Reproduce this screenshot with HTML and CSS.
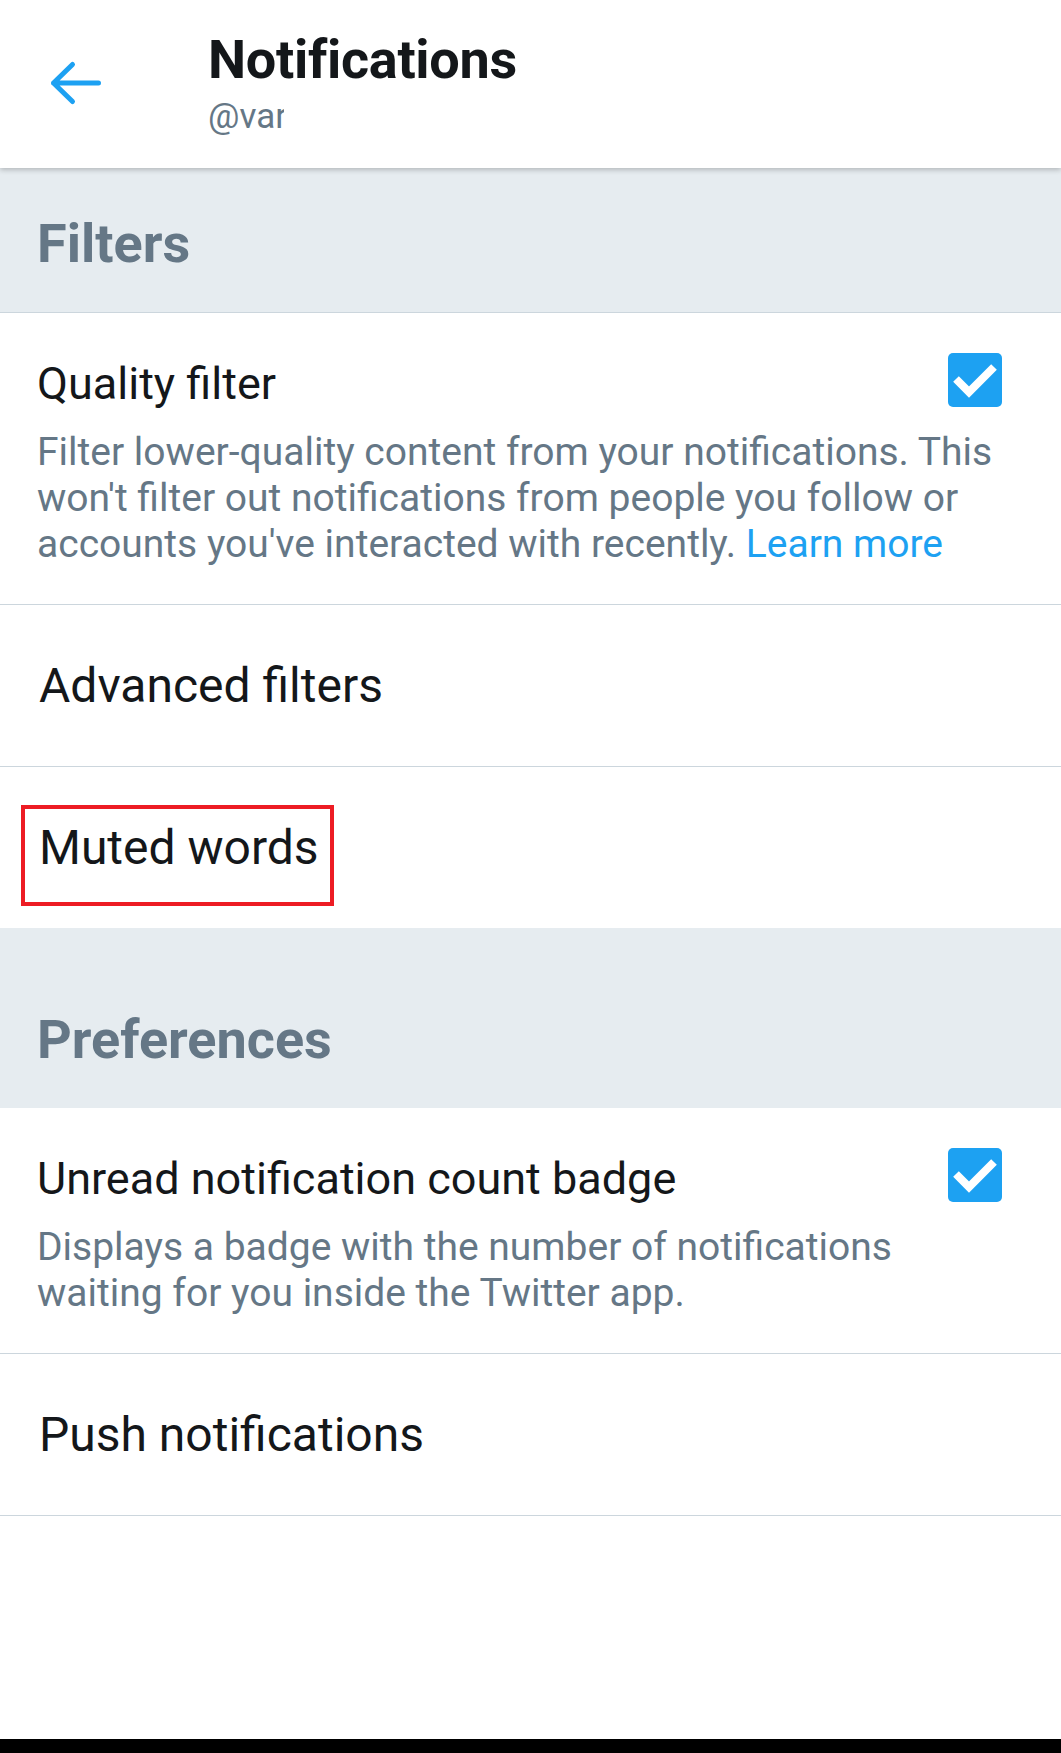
FILE: index.html
```html
<!DOCTYPE html>
<html lang="en">
<head>
<meta charset="utf-8">
<title>Notifications</title>
<link rel="stylesheet" href="styles.css">
</head>
<body>
<div class="screen">
  <header class="appbar">
    <div class="back">
      <svg class="back-icon" width="56" height="46" viewBox="0 0 56 46" aria-hidden="true">
        <path d="M5.5 23 H50.5 M24.5 4.5 L5.5 23 L24.5 41.5" fill="none" stroke="#1da1f2" stroke-width="5" stroke-linecap="round" stroke-linejoin="round"/>
      </svg>
    </div>
    <div class="titles">
      <div class="title">Notifications</div>
      <div class="handle">@var</div>
    </div>
  </header>

  <div class="section-head filters">Filters</div>

  <div class="row detail">
    <div class="row-top">
      <div class="row-title">Quality filter</div>
      <svg class="check" width="54" height="54" viewBox="0 0 54 54" aria-hidden="true">
        <rect width="54" height="54" rx="5" fill="#1da1f2"/>
        <polyline points="8,26 21,39 46,14" fill="none" stroke="#fff" stroke-width="8"/>
      </svg>
    </div>
    <div class="row-desc">Filter lower-quality content from your notifications. This won't filter out notifications from people you follow or accounts you've interacted with recently. <span class="link">Learn more</span></div>
  </div>

  <div class="row simple bordered">Advanced filters</div>

  <div class="row simple muted">
    <span class="mark"></span>
    Muted words
  </div>

  <div class="section-head prefs">Preferences</div>

  <div class="row detail">
    <div class="row-top">
      <div class="row-title">Unread notification count badge</div>
      <svg class="check" width="54" height="54" viewBox="0 0 54 54" aria-hidden="true">
        <rect width="54" height="54" rx="5" fill="#1da1f2"/>
        <polyline points="8,26 21,39 46,14" fill="none" stroke="#fff" stroke-width="8"/>
      </svg>
    </div>
    <div class="row-desc">Displays a badge with the number of notifications waiting for you inside the Twitter app.</div>
  </div>

  <div class="row simple bordered">Push notifications</div>

  <div class="spacer"></div>
  <div class="navbar"></div>
</div>
</body>
</html>
```

FILE: styles.css
```css
* { box-sizing: border-box; }

html, body {
  margin: 0;
  padding: 0;
  background: #ffffff;
}

body {
  font-family: Roboto, "Noto Sans", "Liberation Sans", sans-serif;
  color: #14171a;
}

.screen {
  display: flex;
  flex-direction: column;
  min-height: 100vh;
}

.appbar {
  position: relative;
  z-index: 2;
  height: 168px;
  background: #ffffff;
  display: flex;
  box-shadow: 0 2px 5px rgba(0, 0, 0, 0.22);
}

.back {
  width: 208px;
  padding-left: 48px;
  padding-top: 60px;
}

.back-icon { display: block; }

.titles {
  padding-top: 28px;
  display: flex;
  flex-direction: column;
}

.title {
  font-size: 54px;
  font-weight: 700;
  line-height: 64px;
  color: #14171a;
  letter-spacing: -0.3px;
}

.handle {
  margin-top: 5px;
  font-size: 35px;
  line-height: 40px;
  color: #657786;
  width: 76px;
  overflow: hidden;
  white-space: nowrap;
}

.section-head {
  background: #e6ecf0;
  padding-left: 37px;
  font-size: 54px;
  font-weight: 700;
  line-height: 64px;
  color: #657786;
}

.section-head.filters {
  height: 145px;
  padding-top: 44px;
  border-bottom: 1px solid #ccd6dd;
}

.section-head.prefs {
  height: 180px;
  padding-top: 80px;
}

.row {
  position: relative;
  background: #ffffff;
}

.row.detail {
  padding: 45px 50px 37px 37px;
  border-bottom: 1px solid #ccd6dd;
}

.row-top {
  display: flex;
  justify-content: space-between;
  align-items: flex-start;
}

.row-title {
  font-size: 45px;
  line-height: 52px;
  color: #14171a;
}

.check {
  display: block;
  margin-top: -5px;
  margin-right: 9px;
  flex: none;
}

.row-desc {
  margin-top: 19px;
  font-size: 39px;
  line-height: 46px;
  color: #657786;
}

.link { color: #1da1f2; }

.row.simple {
  height: 162px;
  display: flex;
  align-items: center;
  padding-left: 39px;
  font-size: 48px;
  line-height: 56px;
  color: #14171a;
}

.row.bordered {
  border-bottom: 1px solid #ccd6dd;
}

.row.muted {
  height: 161px;
}

.mark {
  position: absolute;
  left: 21px;
  top: 38px;
  width: 313px;
  height: 101px;
  border: 4px solid #ed1c24;
}

.spacer { flex: 1; }

.navbar {
  height: 14px;
  background: #000000;
}
```
